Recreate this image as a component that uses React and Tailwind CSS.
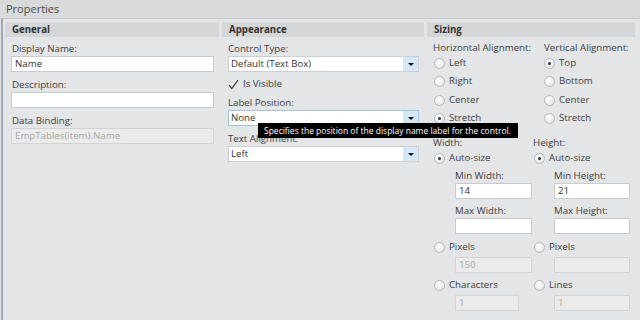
import React from 'react';

function TextInput({ value = '', disabled = false, className = '' }) {
  return (
    <div
      className={`h-[16px] border px-[3px] leading-[14px] ${disabled ? 'border-[#d2d3d5] bg-[#ebebec] text-[#a8a8a8]' : 'border-[#c9cacc] bg-white text-[#333]'} ${className}`}
    >
      {value}
    </div>
  );
}

function Select({ value, focused = false }) {
  return (
    <div className={`flex h-[16px] w-[191px] border bg-white ${focused ? 'border-[#a5c4de]' : 'border-[#cdd0d3]'}`}>
      <span className="flex-1 pl-[2px] leading-[14px] text-[#333]">{value}</span>
      <span className="flex w-[15px] items-center justify-center bg-[#d5e8f6]">
        <span className="h-0 w-0 border-l-[3px] border-r-[3px] border-t-[3px] border-l-transparent border-r-transparent border-t-[#111]" />
      </span>
    </div>
  );
}

function Radio({ label, checked = false }) {
  return (
    <div className="ml-[1px] flex h-full items-center">
      <span className="flex h-[11px] w-[11px] items-center justify-center rounded-full border border-[#b5b8bd] bg-[radial-gradient(circle_at_40%_35%,#ffffff,#dfe0e3)]">
        {checked && <span className="h-[3px] w-[3px] rounded-full bg-[#333]" />}
      </span>
      <span className="ml-[4px]">{label}</span>
    </div>
  );
}

function Header({ children }) {
  return <div className="h-[15px] bg-[#d5d6d8] pl-[7px] font-bold leading-[15px] text-[#333]">{children}</div>;
}

function Label({ children, className = '' }) {
  return <div className={`h-[14px] leading-[14px] ${className}`}>{children}</div>;
}

export default function App() {
  return (
    <div className="relative h-[320px] w-[640px] overflow-hidden bg-[#e4e5e7] font-['Open_Sans',sans-serif] text-[9.7px] text-[#404040]">
      <div className="h-[19px] border-b border-[#c8c9cb] bg-[#d9dadc] pl-[6px] text-[11px] leading-[18px] text-[#4b4b4b]">Properties</div>
      <div className="ml-px flex h-[301px] gap-[3px] border-l-2 border-[#9ea8b6] pl-[2px] pt-[3px]">
        {/* General */}
        <div className="w-[214px]">
          <Header>General</Header>
          <div className="pl-[6px] pr-[5px] pt-[5px]">
            <Label className="pl-[1px]">Display Name:</Label>
            <TextInput value="Name" />
            <Label className="mt-[6px] pl-[1px]">Description:</Label>
            <TextInput />
            <Label className="mt-[6px] pl-[1px]">Data Binding:</Label>
            <TextInput value="EmpTables(item).Name" disabled />
          </div>
        </div>

        {/* Appearance */}
        <div className="w-[202px]">
          <Header>Appearance</Header>
          <div className="pl-[6px] pt-[5px]">
            <Label>Control Type:</Label>
            <Select value="Default (Text Box)" />
            <div className="mt-[5px] flex h-[15px] items-center">
              <svg width="11" height="11" viewBox="0 0 11 11">
                <path d="M1 6 L3.8 9.5 L10 1" fill="none" stroke="#333" strokeWidth="1.2" />
              </svg>
              <span className="ml-[4px]">Is Visible</span>
            </div>
            <Label className="mt-[4px]">Label Position:</Label>
            <Select value="None" focused />
            <Label className="mt-[6px]">Text Alignment:</Label>
            <Select value="Left" />
          </div>
        </div>

        {/* Sizing */}
        <div className="w-[208px]">
          <Header>Sizing</Header>
          <div className="pl-[6px] pt-[5px]">
            <div className="grid grid-cols-[110px_1fr]">
              <div className="h-[12px] leading-[12px]">Horizontal Alignment:</div>
              <div className="ml-[1px] h-[12px] leading-[12px]">Vertical Alignment:</div>
            </div>
            <div className="grid grid-cols-[110px_1fr] grid-rows-[repeat(4,18.5px)]">
              <Radio label="Left" />
              <Radio label="Top" checked />
              <Radio label="Right" />
              <Radio label="Bottom" />
              <Radio label="Center" />
              <Radio label="Center" />
              <Radio label="Stretch" checked />
              <Radio label="Stretch" />
            </div>
            <div className="mt-[8px] grid grid-cols-[100px_1fr]">
              <div>
                <Label>Width:</Label>
                <div className="h-[16px]">
                  <Radio label="Auto-size" checked />
                </div>
                <Label className="ml-[22px] mt-[3px]">Min Width:</Label>
                <TextInput value="14" className="ml-[22px] w-[77px]" />
                <Label className="ml-[22px] mt-[5px]">Max Width:</Label>
                <TextInput className="ml-[22px] w-[77px]" />
                <div className="mt-[5px] h-[16px]">
                  <Radio label="Pixels" />
                </div>
                <TextInput value="150" disabled className="ml-[22px] mt-[2px] w-[77px]" />
                <div className="mt-[4px] h-[16px]">
                  <Radio label="Characters" />
                </div>
                <TextInput value="1" disabled className="ml-[22px] mt-[2px] w-[64px]" />
              </div>
              <div>
                <Label>Height:</Label>
                <div className="h-[16px]">
                  <Radio label="Auto-size" checked />
                </div>
                <Label className="ml-[21px] mt-[3px]">Min Height:</Label>
                <TextInput value="21" className="ml-[21px] w-[76px]" />
                <Label className="ml-[21px] mt-[5px]">Max Height:</Label>
                <TextInput className="ml-[21px] w-[76px]" />
                <div className="mt-[5px] h-[16px]">
                  <Radio label="Pixels" />
                </div>
                <TextInput disabled className="ml-[21px] mt-[2px] w-[76px]" />
                <div className="mt-[4px] h-[16px]">
                  <Radio label="Lines" />
                </div>
                <TextInput value="1" disabled className="ml-[21px] mt-[2px] w-[76px]" />
              </div>
            </div>
          </div>
        </div>
      </div>

      <div className="absolute left-[258px] top-[123px] h-[15px] w-[260px] bg-black pl-[6px] text-[8.5px] leading-[15px] text-white">
        Specifies the position of the display name label for the control.
      </div>
    </div>
  );
}
